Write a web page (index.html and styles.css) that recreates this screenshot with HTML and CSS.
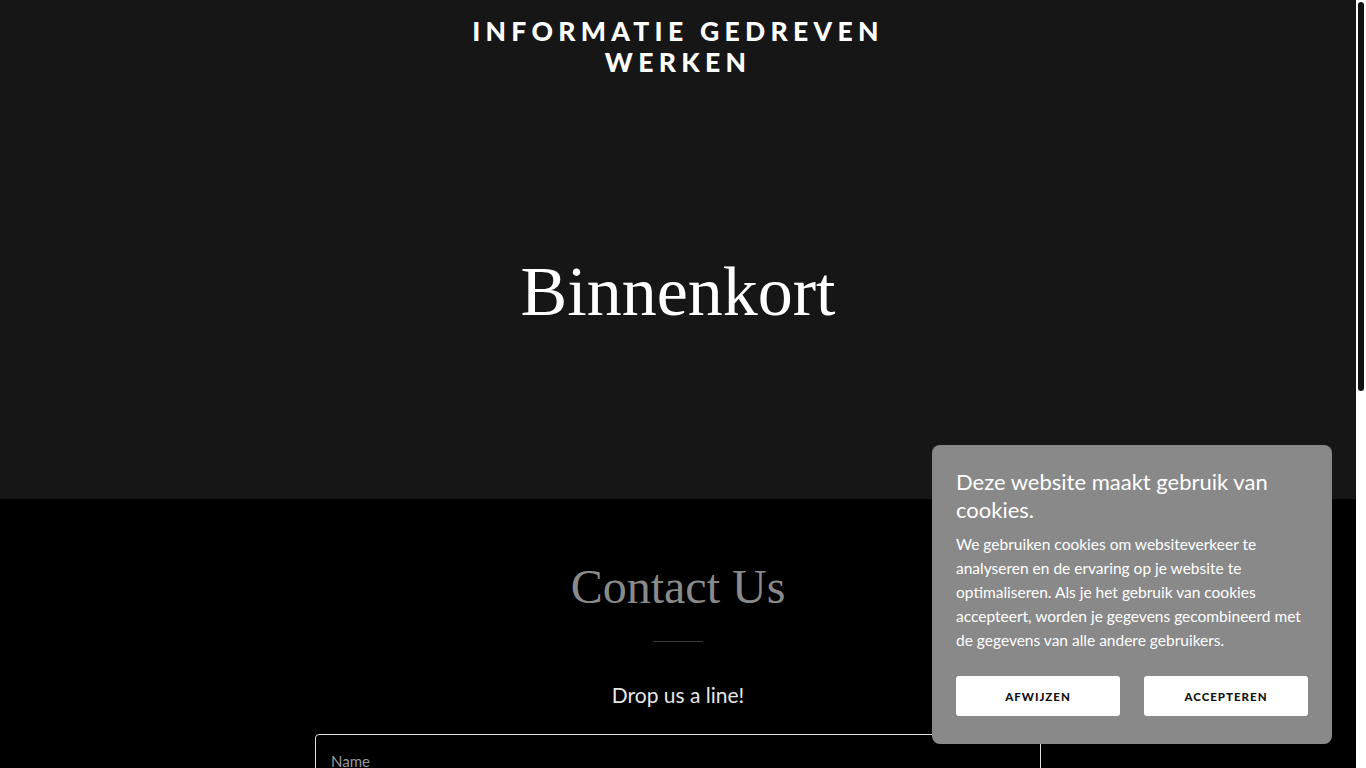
FILE: index.html
```html
<!DOCTYPE html>
<html lang="nl">
<head>
<meta charset="utf-8">
<title>Informatie Gedreven Werken</title>
<link rel="stylesheet" href="styles.css">
</head>
<body>
<div class="page">
  <header class="hero">
    <h1 class="site-title">INFORMATIE GEDREVEN WERKEN</h1>
    <div class="hero-body">
      <h2 class="hero-heading">Binnenkort</h2>
    </div>
  </header>
  <section class="contact">
    <h2 class="contact-heading">Contact Us</h2>
    <hr class="divider">
    <p class="contact-sub">Drop us a line!</p>
    <form class="contact-form">
      <label class="field">
        <span class="field-label">Name</span>
      </label>
    </form>
  </section>
</div>

<div class="cookie">
  <h3 class="cookie-title">Deze website maakt gebruik van cookies.</h3>
  <p class="cookie-text">We gebruiken cookies om websiteverkeer te analyseren en de ervaring op je website te optimaliseren. Als je het gebruik van cookies accepteert, worden je gegevens gecombineerd met de gegevens van alle andere gebruikers.</p>
  <div class="cookie-actions">
    <button class="cookie-btn" type="button">AFWIJZEN</button>
    <button class="cookie-btn" type="button">ACCEPTEREN</button>
  </div>
</div>

<div class="scrollbar"><div class="scroll-thumb"></div></div>
</body>
</html>
```
FILE: styles.css
```css
* { box-sizing: border-box; }
html, body { margin: 0; padding: 0; }
body {
  background: #000;
  font-family: Lato, "Open Sans", sans-serif;
  color: #fff;
  height: 768px;
  overflow: hidden;
}
.page {
  width: calc(100% - 10px);
}
.hero {
  background: #161616;
  height: 499px;
  display: flex;
  flex-direction: column;
  align-items: center;
  padding-top: 16px;
}
.site-title {
  margin: 0;
  max-width: 460px;
  text-align: center;
  font-family: Lato, sans-serif;
  font-weight: 900;
  font-size: 26.5px;
  line-height: 31px;
  letter-spacing: 5.3px;
  color: #fff;
}
.hero-body {
  flex: 1;
  display: flex;
  align-items: flex-start;
  justify-content: center;
  padding-top: 173px;
}
.hero-heading {
  margin: 0;
  font-family: "Liberation Serif", serif;
  font-weight: 400;
  font-size: 70px;
  line-height: 82px;
  color: #fff;
}
.contact {
  display: flex;
  flex-direction: column;
  align-items: center;
  padding-top: 56px;
}
.contact-heading {
  margin: 0;
  font-family: "Liberation Serif", serif;
  font-weight: 400;
  font-size: 48px;
  line-height: 64px;
  color: #8a8a8a;
}
.divider {
  width: 50px;
  border: 0;
  border-top: 1px solid #3a3a3a;
  margin: 22px 0 0;
}
.contact-sub {
  margin: 37px 0 0;
  font-size: 21px;
  line-height: 32px;
  color: #e6e6e6;
}
.contact-form {
  margin-top: 23px;
  width: 726px;
}
.field {
  display: block;
  height: 60px;
  border: 1px solid #e0e0e0;
  border-radius: 4px;
  padding: 16px 15px;
}
.field-label {
  font-size: 15px;
  color: #9a9a9a;
}
.cookie {
  position: fixed;
  left: 932px;
  top: 445px;
  width: 400px;
  height: 299px;
  background: #898989;
  border-radius: 8px;
  padding: 23px 24px 24px;
}
.cookie-title {
  margin: 0;
  font-weight: 400;
  font-size: 22px;
  line-height: 28px;
  color: #fff;
}
.cookie-text {
  margin: 8px 0 0;
  font-size: 15.5px;
  line-height: 24px;
  color: #fff;
}
.cookie-actions {
  display: flex;
  gap: 24px;
  margin-top: 24px;
}
.cookie-btn {
  flex: 1;
  height: 40px;
  background: #fff;
  border: 0;
  border-radius: 3px;
  font-family: Lato, sans-serif;
  font-weight: 900;
  font-size: 11.5px;
  letter-spacing: 1px;
  color: #111;
  padding: 0;
}
.scrollbar {
  position: fixed;
  top: 0;
  right: 0;
  width: 10px;
  height: 100%;
  background: #fff;
}
.scroll-thumb {
  position: absolute;
  top: 2px;
  left: 2px;
  width: 6px;
  height: 389px;
  background: #111;
  border-radius: 3px;
}
```
